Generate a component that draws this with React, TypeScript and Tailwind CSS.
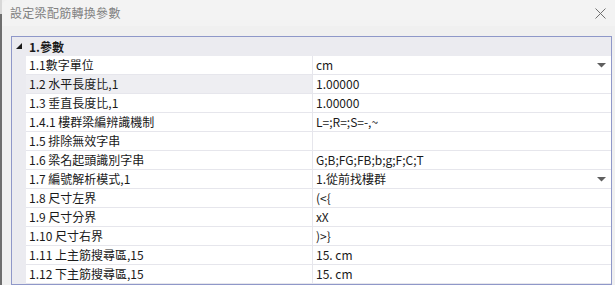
// 梁配筋轉換參數設定ダイアログ

const rows = [
  { label: '1.1數字單位', value: 'cm', dropdown: true },
  { label: '1.2 水平長度比,1', value: '1.00000', active: true },
  { label: '1.3 垂直長度比,1', value: '1.00000' },
  { label: '1.4.1 樓群梁編辨識機制', value: 'L=;R=;S=-,~' },
  { label: '1.5 排除無效字串', value: '' },
  { label: '1.6 梁名起頭識別字串', value: 'G;B;FG;FB;b;g;F;C;T' },
  { label: '1.7 編號解析模式,1', value: '1.從前找樓群', dropdown: true },
  { label: '1.8 尺寸左界', value: '(<{' },
  { label: '1.9 尺寸分界', value: 'xX' },
  { label: '1.10 尺寸右界', value: ')>}' },
  { label: '1.11 上主筋搜尋區,15', value: '15. cm' },
  { label: '1.12 下主筋搜尋區,15', value: '15. cm' },
]

export default function App() {
  return (
    <div className="w-[615px] h-[285px] overflow-hidden flex bg-[#f0f0f0] text-[12px] text-[#1a1a1a] font-['Noto_Sans_CJK_TC','Noto_Sans',sans-serif]">
      <div className="w-[2px] shrink-0 flex flex-col">
        <div className="h-[14px] bg-[#d8d8d8]" />
        <div className="flex-1 bg-[#6e6e6e]" />
      </div>
      <div className="flex-1 flex flex-col">
        <div className="h-[29px] flex items-center justify-between pl-[8px] pr-[9px] bg-[#f3f3f3] rounded-tl-[6px]">
          <span className="text-[#808080] tracking-[0.3px]">設定梁配筋轉換參數</span>
          <svg width="11" height="11" viewBox="0 0 11 11">
            <path d="M0.5 0.5 L10.5 10.5 M10.5 0.5 L0.5 10.5" stroke="#707070" strokeWidth="1" />
          </svg>
        </div>
        <div className="pl-[9px] pt-[10px] pr-[3px]">
          <div className="border border-[#8f98c9] bg-[#ebebf0]">
            <div className="h-[19px] flex items-center">
              <svg width="15" height="19" viewBox="0 0 15 19" className="shrink-0">
                <polygon points="10,6 10,12 4,12" fill="#1a1a1a" />
              </svg>
              <span className="pl-[2px] font-bold">1.參數</span>
            </div>
            {rows.map((row, index) => (
              <div key={index} className="flex h-[19px]">
                <div className="w-[14px] shrink-0" />
                <div
                  className={`w-[287px] shrink-0 flex items-center pl-[3px] border-b border-r border-[#e6e6ec] ${
                    row.active ? 'bg-[#eeeef2]' : 'bg-white'
                  }`}
                >
                  {row.label}
                </div>
                <div className="flex-1 flex items-center justify-between pl-[3px] pr-[5px] bg-white border-b border-[#e6e6ec]">
                  <span>{row.value}</span>
                  {row.dropdown && (
                    <svg width="9" height="5" viewBox="0 0 9 5">
                      <polygon points="0,0 9,0 4.5,4.5" fill="#5f5f5f" />
                    </svg>
                  )}
                </div>
              </div>
            ))}
          </div>
        </div>
      </div>
    </div>
  )
}
